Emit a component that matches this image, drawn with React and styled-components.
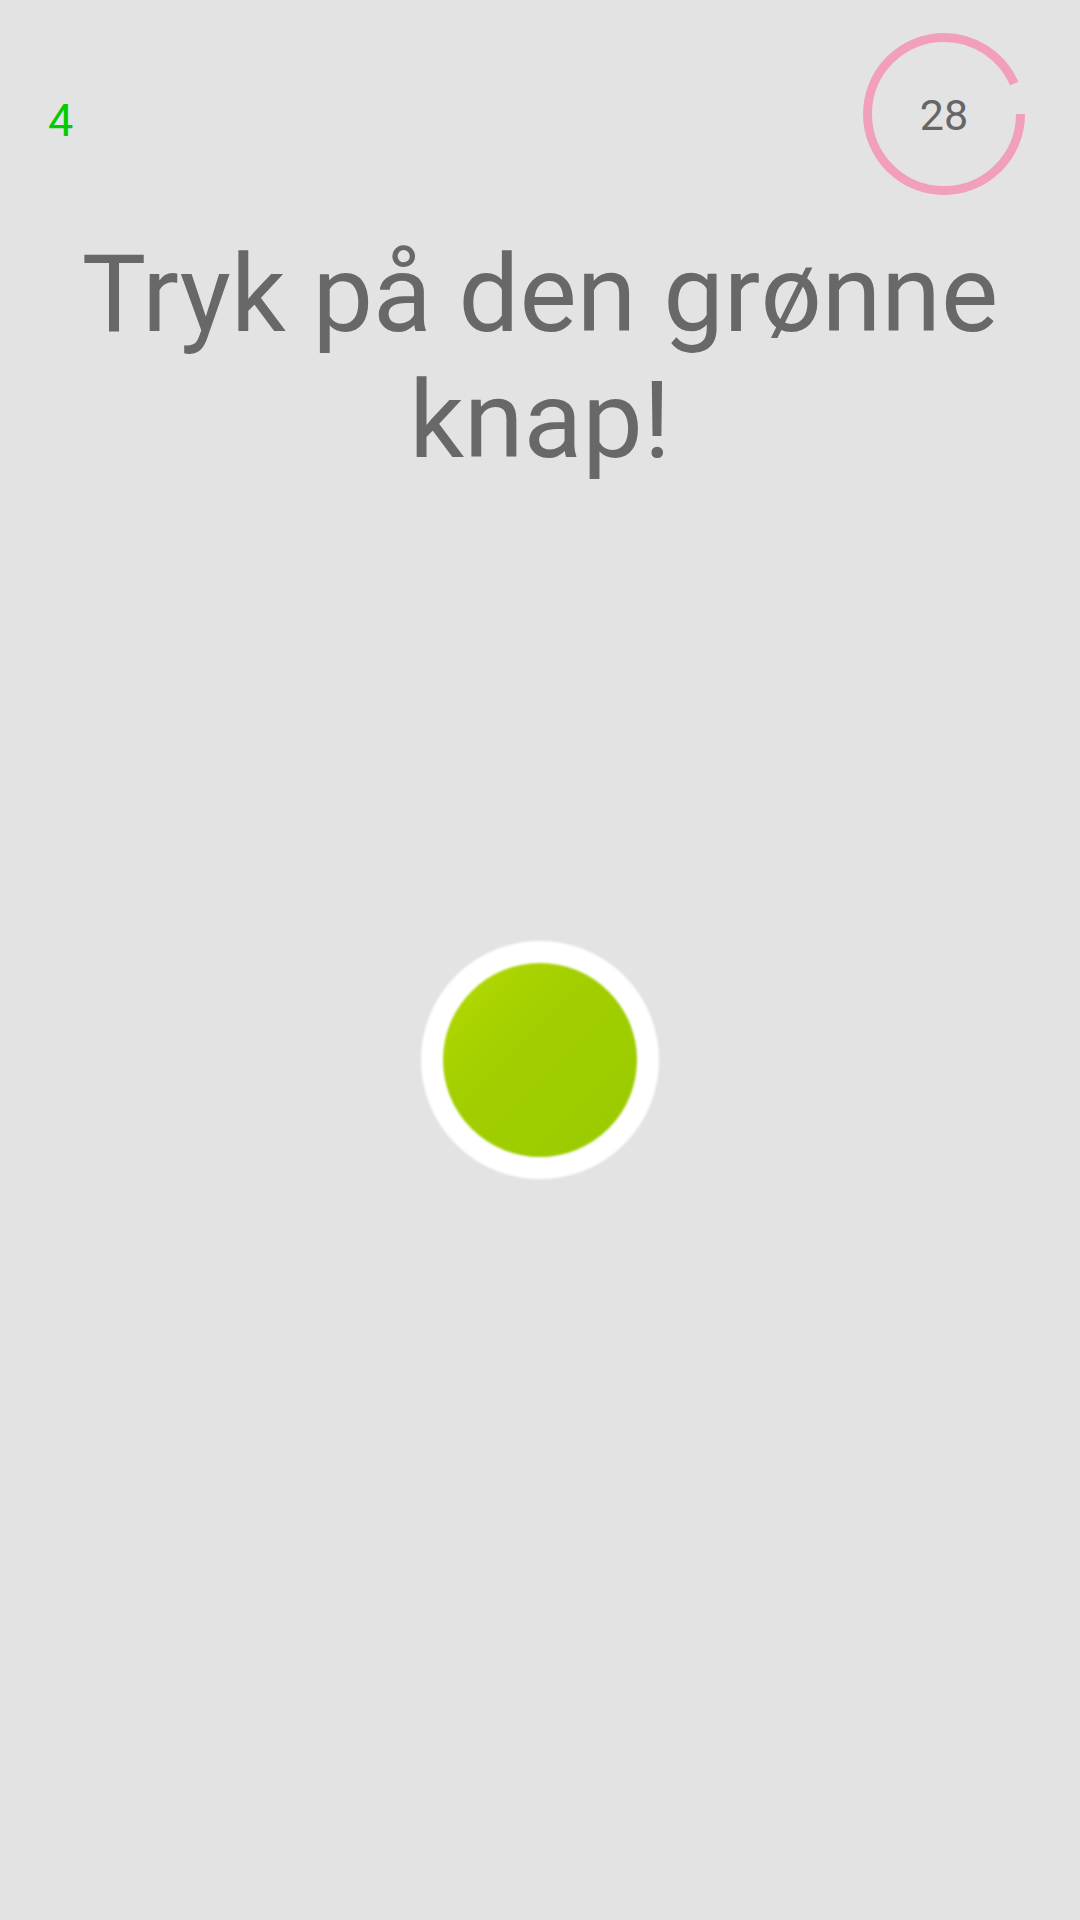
import React from 'react';
import styled, { createGlobalStyle } from 'styled-components';

const GlobalStyle = createGlobalStyle`
  html, body {
    margin: 0;
    padding: 0;
    background: #e3e3e3;
  }
  body {
    font-family: Roboto, "Liberation Sans", sans-serif;
  }
`;

const Screen = styled.div`
  min-height: 1920px;
  background: #e3e3e3;
  display: flex;
  flex-direction: column;
`;

const Header = styled.div`
  display: flex;
  justify-content: space-between;
  align-items: center;
  padding: 33px 55px 0 48px;
`;

const Score = styled.div`
  color: #00cc00;
  font-size: 45px;
  line-height: 1;
  margin-top: 12px;
`;

const Timer = styled.div`
  position: relative;
  width: 162px;
  height: 162px;
`;

const TimerValue = styled.span`
  position: absolute;
  inset: 0;
  display: flex;
  align-items: center;
  justify-content: center;
  color: #666;
  font-size: 43px;
  padding-top: 2px;
`;

const Title = styled.h1`
  margin: 36px 0 0;
  text-align: center;
  font-size: 108px;
  font-weight: 400;
  line-height: normal;
  color: #686868;
`;

const Stage = styled.div`
  display: flex;
  justify-content: center;
  padding-top: 458px;
`;

const GreenButton = styled.button`
  width: 194px;
  height: 194px;
  padding: 0;
  border: 22px solid #fff;
  border-radius: 50%;
  box-sizing: content-box;
  background: linear-gradient(135deg, #b6db00 0%, #a2cf00 38%, #9acb00 100%);
  filter: blur(1px);
  cursor: pointer;
`;

const TimerRing = ({ size = 162, stroke = 9, progress }) => {
  const r = (size - stroke) / 2;
  const c = 2 * Math.PI * r;
  return (
    <svg width={size} height={size} viewBox={`0 0 ${size} ${size}`}>
      <circle
        cx={size / 2}
        cy={size / 2}
        r={r}
        fill="none"
        stroke="#f19fba"
        strokeWidth={stroke}
        strokeDasharray={`${c * progress} ${c}`}
      />
    </svg>
  );
};

const App = () => {
  const seconds = 28;
  return (
    <Screen>
      <GlobalStyle />
      <Header>
        <Score>4</Score>
        <Timer>
          <TimerRing progress={seconds / 30} />
          <TimerValue>{seconds}</TimerValue>
        </Timer>
      </Header>
      <Title>
        Tryk på den grønne
        <br />
        knap!
      </Title>
      <Stage>
        <GreenButton aria-label="grøn knap" />
      </Stage>
    </Screen>
  );
};

export default App;
